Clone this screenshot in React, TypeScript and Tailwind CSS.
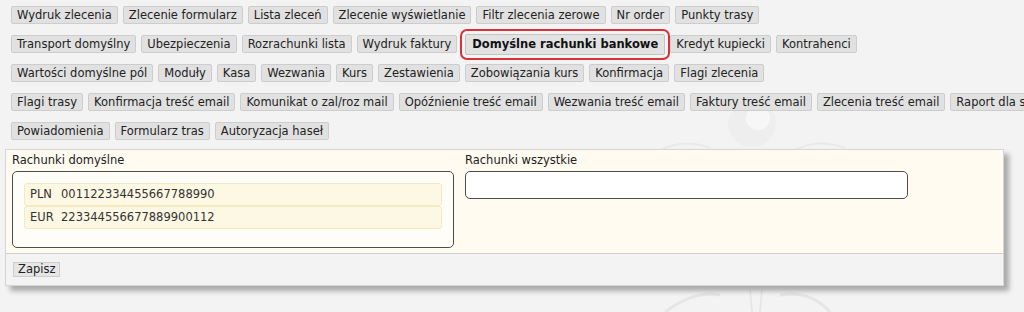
import React from "react";

const rows: string[][] = [
  ["Wydruk zlecenia", "Zlecenie formularz", "Lista zleceń", "Zlecenie wyświetlanie", "Filtr zlecenia zerowe", "Nr order", "Punkty trasy"],
  ["Transport domyślny", "Ubezpieczenia", "Rozrachunki lista", "Wydruk faktury", "Domyślne rachunki bankowe", "Kredyt kupiecki", "Kontrahenci"],
  ["Wartości domyślne pól", "Moduły", "Kasa", "Wezwania", "Kurs", "Zestawienia", "Zobowiązania kurs", "Konfirmacja", "Flagi zlecenia"],
  ["Flagi trasy", "Konfirmacja treść email", "Komunikat o zal/roz mail", "Opóźnienie treść email", "Wezwania treść email", "Faktury treść email", "Zlecenia treść email", "Raport dla sprzedawców"],
  ["Powiadomienia", "Formularz tras", "Autoryzacja haseł"],
];

const active = "Domyślne rachunki bankowe";

const accounts = [
  { cur: "PLN", nr: "001122334455667788990" },
  { cur: "EUR", nr: "223344556677889900112" },
];

const TabButton = ({ label }: { label: string }) => {
  if (label === active) {
    return (
      <button className="shrink-0 h-[21px] px-[6px] ml-[3px] rounded-[2px] border border-[#c4c4c4] bg-[#e2e2e2] font-bold text-[#111] leading-[19px] outline-2 outline-[#d7323a] outline-offset-[3px]">
        {label}
      </button>
    );
  }
  return (
    <button className="shrink-0 h-[18px] px-[5px] rounded-[2px] border border-[#cdcdcd] bg-[#e1e1e1] text-[#222] leading-[16px]">
      {label}
    </button>
  );
};

const App = () => {
  return (
    <div
      className="relative w-[1024px] h-[312px] overflow-hidden bg-[#f3f3f3] text-[11.5px] text-[#222]"
      style={{ fontFamily: '"DejaVu Sans", Verdana, sans-serif' }}
    >
      {/* faint watermark behind everything */}
      <svg className="absolute left-[640px] top-[90px] pointer-events-none" width="384" height="222" viewBox="0 0 384 222" fill="none">
        <circle cx="112" cy="33" r="24" fill="#eeeeee" />
        <circle cx="118" cy="28" r="12" fill="#f7f7f7" />
        <path d="M20 60 Q45 48 70 58" stroke="#e9e9e9" strokeWidth="2" />
        <path d="M155 60 Q178 48 205 58" stroke="#e9e9e9" strokeWidth="2" />
        <path d="M25 222 Q55 200 80 205" stroke="#e6e6e6" strokeWidth="3" />
        <path d="M110 200 L112 222 M122 200 L120 222" stroke="#e6e6e6" strokeWidth="2" />
        <path d="M140 205 Q170 200 190 222" stroke="#e6e6e6" strokeWidth="3" />
      </svg>

      <div className="relative flex flex-col gap-[11px] pl-[11px] pt-[6px] whitespace-nowrap">
        {rows.map((row, i) => (
          <div key={i} className="flex items-center gap-[5px] h-[18px]">
            {row.map((label) => (
              <TabButton key={label} label={label} />
            ))}
          </div>
        ))}
      </div>

      <div className="relative mt-[9px] ml-[5px] w-[999px] border border-[#d6d6d6] bg-[#f3f3f3] shadow-[5px_5px_5px_rgba(0,0,0,0.3)]">
        <div className="flex gap-[11px] bg-[#fffbf1] px-[6px] pt-[1px] pb-[5px] border-b border-[#cfcfcf]">
          <div className="w-[442px]">
            <div className="h-[20px] leading-[18px] text-[#222]">Rachunki domyślne</div>
            <div className="rounded-[5px] border border-[#4d4d4d] bg-[#fffdf7] px-[11px] pt-[11px] pb-[18px]">
              {accounts.map((a) => (
                <div
                  key={a.cur}
                  className="flex h-[23px] items-center rounded-[3px] border border-[#f4eac0] bg-[#fdf8e3] px-[5px] text-[#333]"
                >
                  <span className="w-[31px]">{a.cur}</span>
                  <span>{a.nr}</span>
                </div>
              ))}
            </div>
          </div>
          <div className="w-[443px]">
            <div className="h-[20px] leading-[18px] text-[#222]">Rachunki wszystkie</div>
            <div className="h-[28px] rounded-[5px] border border-[#4d4d4d] bg-white" />
          </div>
        </div>
        <div className="h-[31px] flex items-center px-[7px]">
          <button className="h-[15px] px-[4px] border border-[#cdcdcd] bg-[#e6e6e6] leading-[13px] text-[#222]">
            Zapisz
          </button>
        </div>
      </div>
    </div>
  );
};

export default App;
